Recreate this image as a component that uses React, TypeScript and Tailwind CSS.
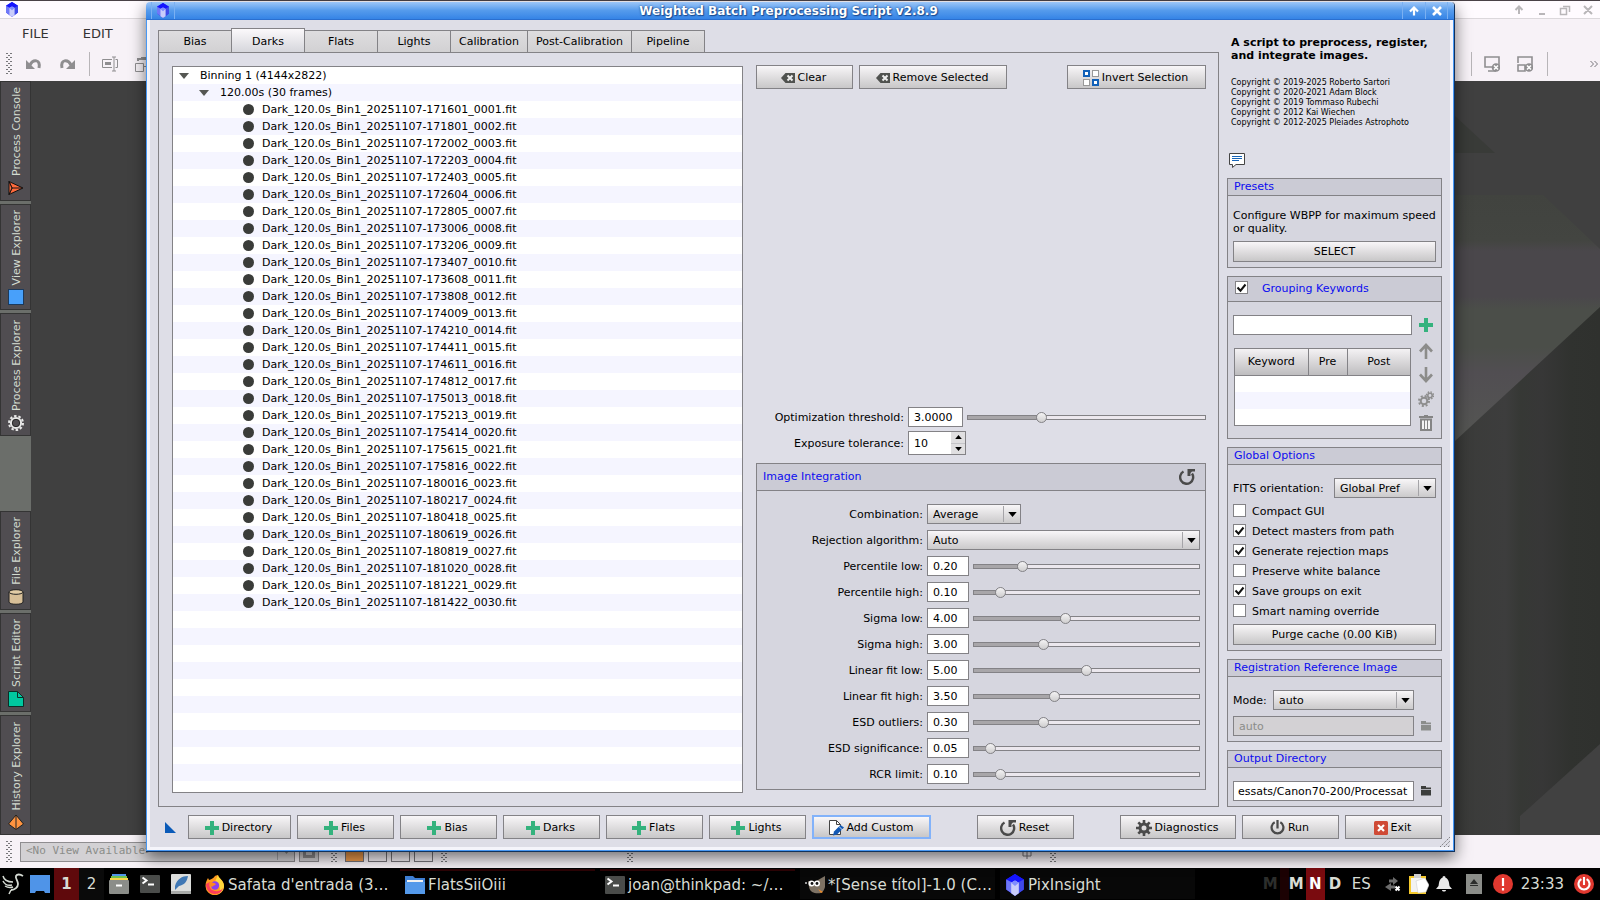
import type { ReactNode } from 'react'

const frames = [
  '171601', '171801', '172002', '172203', '172403', '172604', '172805', '173006', '173206', '173407',
  '173608', '173808', '174009', '174210', '174411', '174611', '174812', '175013', '175213', '175414',
  '175615', '175816', '180016', '180217', '180418', '180619', '180819', '181020', '181221', '181422',
]

const tabs = [
  { label: 'Bias', width: 'w-[74px]' },
  { label: 'Darks', width: 'w-[74px]' },
  { label: 'Flats', width: 'w-[74px]' },
  { label: 'Lights', width: 'w-[74px]' },
  { label: 'Calibration', width: 'w-[78px]' },
  { label: 'Post-Calibration', width: 'w-[105px]' },
  { label: 'Pipeline', width: 'w-[74px]' },
]

const sliders = [
  { label: 'Percentile low:', value: '0.20', pos: 20 },
  { label: 'Percentile high:', value: '0.10', pos: 10 },
  { label: 'Sigma low:', value: '4.00', pos: 40 },
  { label: 'Sigma high:', value: '3.00', pos: 30 },
  { label: 'Linear fit low:', value: '5.00', pos: 50 },
  { label: 'Linear fit high:', value: '3.50', pos: 35 },
  { label: 'ESD outliers:', value: '0.30', pos: 30 },
  { label: 'ESD significance:', value: '0.05', pos: 5 },
  { label: 'RCR limit:', value: '0.10', pos: 10 },
]

const options = [
  { label: 'Compact GUI', checked: false },
  { label: 'Detect masters from path', checked: true },
  { label: 'Generate rejection maps', checked: true },
  { label: 'Preserve white balance', checked: false },
  { label: 'Save groups on exit', checked: true },
  { label: 'Smart naming override', checked: false },
]

/* ---------- icons ---------- */

function Gem({ className }: { className: string }) {
  return (
    <svg className={className} viewBox="0 0 16 20" aria-hidden="true">
      <path d="M8 0 16 5v9l-8 6-8-6V5z" fill="#2a2af0" />
      <path d="M8 0 16 5 8 9.500 0 5z" fill="#1414ff" />
      <path d="M0 5 5 7.500V17.500L0 14z" fill="#6f78f8" />
      <path d="M16 5 11 7.500V17.500L16 14z" fill="#3f4be8" />
      <path d="M4.500 8 8 6l3.500 2v9.500L8 20l-3.500-2.500z" fill="#c9cdfb" />
      <path d="M4.500 8 8 6l3.500 2-3.500 3z" fill="#7f8cff" />
    </svg>
  )
}

function Plus() {
  return (
    <svg className="size-[14px]" viewBox="0 0 14 14" aria-hidden="true">
      <path d="M5 0h4v5h5v4H9v5H5V9H0V5h5z" fill="#34b27d" />
    </svg>
  )
}

function ClearIcon() {
  return (
    <svg className="h-[10px] w-[14px]" viewBox="0 0 14 10" aria-hidden="true">
      <path d="M4.500 0H14v10H4.500L0 5z" fill="#50524f" />
      <path d="M6.500 2.500l5 5M11.500 2.500l-5 5" stroke="#eee" strokeWidth="2" />
    </svg>
  )
}

function InvertIcon() {
  return (
    <svg className="size-4" viewBox="0 0 16 16" aria-hidden="true">
      <rect x="1" y="1" width="5" height="5" fill="#fff" stroke="#1160b8" strokeWidth="2" />
      <rect x="10" y="10" width="5" height="5" fill="#fff" stroke="#1160b8" strokeWidth="2" />
      <rect x="9.500" y="0.500" width="6" height="6" fill="#fff" stroke="#999" />
      <rect x="0.500" y="9.500" width="6" height="6" fill="#fff" stroke="#999" />
    </svg>
  )
}

function ResetIcon() {
  return (
    <svg className="size-4" viewBox="0 0 16 16" aria-hidden="true">
      <path d="M4.500 2.500A6.500 6.500 0 1 0 13 4.500" fill="none" stroke="#4a4a4a" strokeWidth="2.400" />
      <path d="M8.500 0H16v2.500h-3L11.500 4v3H8.500z" fill="#4a4a4a" />
    </svg>
  )
}

function Gear({ className, color }: { className: string; color: string }) {
  return (
    <svg className={className} viewBox="0 0 16 16" aria-hidden="true">
      <circle cx="8" cy="8" r="4" fill="none" stroke={color} strokeWidth="3" />
      <path
        d="M8 0v3M8 13v3M0 8h3M13 8h3M2.300 2.300l2.200 2.200M11.500 11.500l2.200 2.200M13.700 2.300l-2.200 2.200M4.500 11.500l-2.200 2.200"
        stroke={color}
        strokeWidth="2.600"
      />
    </svg>
  )
}

function RingGear() {
  return (
    <svg className="size-4" viewBox="0 0 16 16" fill="none" aria-hidden="true">
      <circle cx="8" cy="8" r="7" stroke="#e8e8e8" strokeWidth="2" strokeDasharray="2.500 1.898" />
      <circle cx="8" cy="8" r="5" stroke="#e8e8e8" strokeWidth="2.200" />
      <circle cx="8" cy="8" r="3.700" stroke="#1c1c1c" strokeWidth="0.800" />
    </svg>
  )
}

function Gears() {
  return (
    <svg className="size-4" viewBox="0 0 16 16" fill="none" stroke="#8e8e8e" aria-hidden="true">
      <circle cx="6" cy="10" r="3.300" strokeWidth="2" />
      <circle cx="6" cy="10" r="5" strokeWidth="2" strokeDasharray="2 1.930" />
      <circle cx="12" cy="4.500" r="2.200" strokeWidth="1.600" />
      <circle cx="12" cy="4.500" r="3.600" strokeWidth="1.400" strokeDasharray="1.500 1.330" />
    </svg>
  )
}

function ArrowIcon({ down }: { down?: boolean }) {
  return (
    <svg className={down ? 'size-4 rotate-180' : 'size-4'} viewBox="0 0 16 16" aria-hidden="true">
      <path d="M8 2v14M2 8.500 8 2l6 6.500" fill="none" stroke="#8c8c8a" strokeWidth="2.600" />
    </svg>
  )
}

function Trash() {
  return (
    <svg className="size-4" viewBox="0 0 16 16" aria-hidden="true">
      <path d="M6 0h4v1h5v2H1V1h5z" fill="#858585" />
      <path d="M3 4.500h10V15H3z" fill="#f4f4f4" stroke="#858585" strokeWidth="2" />
      <path d="M6.500 5v9M9.500 5v9" stroke="#858585" />
    </svg>
  )
}

function Folder({ color }: { color: string }) {
  return (
    <svg className="h-[10px] w-[10px]" viewBox="0 0 10 10" aria-hidden="true">
      <path d="M0 0h5v1.500h5V3H0zM0 3.800h10V9.500H0z" fill={color} />
    </svg>
  )
}

function Comment() {
  return (
    <svg className="size-4" viewBox="0 0 16 16" aria-hidden="true">
      <path d="M.5.5h15v11H7l-3.500 3v-3h-3z" fill="#fff" stroke="#444" />
      <path d="M3 3.500h10M3 5.500h10M3 7.500h7" stroke="#1764b8" />
    </svg>
  )
}

function CustomIcon() {
  return (
    <svg className="size-4" viewBox="0 0 16 16" aria-hidden="true">
      <path d="M1.500.5h7l4 4v10h-11z" fill="#fff" stroke="#444" />
      <path d="M8.500.5v4h4" fill="none" stroke="#444" />
      <path d="M5 15.500l1-4 6.500-6.500L16 7.500 9 14.500z" fill="#1258b4" />
      <path d="M11 6.500l3.500 3.500" stroke="#fff" strokeWidth="0.800" />
    </svg>
  )
}

function Power({ color, className }: { color: string; className: string }) {
  return (
    <svg className={className} viewBox="0 0 16 16" fill="none" stroke={color} strokeWidth="2.400" aria-hidden="true">
      <path d="M5 2.500A6.300 6.300 0 1 0 11 2.500M8 0v9" />
    </svg>
  )
}

function ExitIcon() {
  return (
    <svg className="size-[14px]" viewBox="0 0 14 14" aria-hidden="true">
      <rect width="14" height="14" rx="1.500" fill="#cf4a35" />
      <path d="M4 4l6 6M10 4l-6 6" stroke="#fff" strokeWidth="2.200" />
    </svg>
  )
}

function Triangle({ className }: { className: string }) {
  return (
    <svg className={className} viewBox="0 0 10 6" aria-hidden="true">
      <path d="M0 0h10L5 6z" fill="currentColor" />
    </svg>
  )
}

function Terminal() {
  return (
    <svg className="size-5" viewBox="0 0 20 20" aria-hidden="true">
      <rect y="1" width="20" height="18" rx="1" fill="#4a4c4a" />
      <path d="M2.500 3.500l4 3-4 3M8 10.500h6" fill="none" stroke="#fff" strokeWidth="2" />
    </svg>
  )
}

function Grip() {
  return (
    <svg className="h-[22px] w-[6px] shrink-0" viewBox="0 0 6 22" aria-hidden="true">
      <path d="M1 0v22M5 0v22" stroke="#77777a" strokeWidth="2" strokeDasharray="1 3" />
      <path d="M3 2v20" stroke="#77777a" strokeWidth="2" strokeDasharray="1 3" />
    </svg>
  )
}

/* ---------- controls ---------- */

function Btn({ icon, width, focused, tall = true, children }: {
  icon?: ReactNode
  width: string
  focused?: boolean
  tall?: boolean
  children: ReactNode
}) {
  return (
    <button
      type="button"
      className={`flex shrink-0 items-center justify-center gap-[3px] bg-linear-to-b from-[#f8f6f8] to-[#c8c7c8] whitespace-nowrap ${width} ${
        tall ? 'h-6 pt-px pr-0.5' : 'h-[21px]'
      } ${focused ? 'border-2 border-[#82b2fa]' : 'border border-[#838286]'}`}
    >
      {icon}
      {children}
    </button>
  )
}

function Select({ id, value, width }: { id: string; value: string; width: string }) {
  return (
    <div className={`relative ${width}`}>
      <select
        id={id}
        className="block h-5 w-full appearance-none border border-[#838286] bg-linear-to-b from-[#f8f6f8] to-[#cbcacb] px-[5px] pt-px leading-[17px]"
      >
        <option>{value}</option>
      </select>
      <span className="pointer-events-none absolute top-0.5 right-0 flex h-4 w-[18px] items-center justify-center border-l border-[#a5a4a8] pr-px text-black">
        <Triangle className="h-[5px] w-[9px]" />
      </span>
    </div>
  )
}

function Slider({ label, pos }: { label: string; pos: number }) {
  return (
    <input
      type="range"
      aria-label={label}
      defaultValue={pos}
      className="h-[5px] min-w-0 flex-1 appearance-none border border-[#838286] [&::-webkit-slider-thumb]:size-[11px] [&::-webkit-slider-thumb]:appearance-none [&::-webkit-slider-thumb]:rounded-full [&::-webkit-slider-thumb]:border [&::-webkit-slider-thumb]:border-[#838286] [&::-webkit-slider-thumb]:bg-linear-to-b [&::-webkit-slider-thumb]:from-[#f4f3f4] [&::-webkit-slider-thumb]:to-[#cfcecf]"
      style={{ background: `linear-gradient(to right, #a8a6a9 ${pos}%, #ece8ee ${pos}%)` }}
    />
  )
}

function Check({ id, checked }: { id: string; checked: boolean }) {
  return (
    <span className="relative block size-[13px] shrink-0">
      <input
        id={id}
        type="checkbox"
        defaultChecked={checked}
        className="peer block size-[13px] appearance-none border border-[#838286] bg-white"
      />
      <svg className="pointer-events-none absolute inset-0 hidden size-[13px] peer-checked:block" viewBox="0 0 13 13">
        <path d="M2.500 6.500l3 3.200L10.500 3.500" fill="none" stroke="#111" strokeWidth="2" />
      </svg>
    </span>
  )
}

function Group({ title, children }: { title: string; children: ReactNode }) {
  return (
    <section className="border border-[#838286] bg-[#d6d6df]">
      <h2 className="h-[17px] border-b border-[#838286] bg-[#cbcbd5] pl-1.5 leading-[15px] text-[#0c0cf0]">{title}</h2>
      <div className="px-[5px] pt-[13px] pb-[5px]">{children}</div>
    </section>
  )
}

/* ---------- dialog ---------- */

function FrameTree() {
  return (
    <ul className="mt-[13px] mb-[13px] min-w-0 flex-1 overflow-hidden border border-[#838286] bg-[repeating-linear-gradient(#fff_0_17px,#f5f5ff_17px_34px)] leading-[17px]">
      <li className="flex h-[17px] items-center gap-[11px] pl-1.5">
        <Triangle className="h-[6px] w-[10px] text-[#555753]" />
        Binning 1 (4144x2822)
      </li>
      <li className="flex h-[17px] items-center gap-[11px] pl-[26px]">
        <Triangle className="h-[6px] w-[10px] text-[#555753]" />
        120.00s (30 frames)
      </li>
      {frames.map((time, i) => (
        <li key={time} className="flex h-[17px] items-center gap-2 pl-[70px]">
          <span className="size-[11px] rounded-full bg-[#3a3c39]" />
          {`Dark_120.0s_Bin1_20251107-${time}_${String(i + 1).padStart(4, '0')}.fit`}
        </li>
      ))}
    </ul>
  )
}

function DarksSettings() {
  return (
    <div className="flex w-[450px] shrink-0 flex-col pt-3 pb-4">
      <div className="flex gap-1.5">
        <Btn width="w-[97px]" icon={<ClearIcon />}>Clear</Btn>
        <Btn width="w-[148px]" icon={<ClearIcon />}>Remove Selected</Btn>
        <div className="flex-1" />
        <Btn width="w-[139px]" icon={<InvertIcon />}>Invert Selection</Btn>
      </div>
      <div className="flex-1" />
      <div className="flex h-5 items-center gap-1">
        <label htmlFor="opt-threshold" className="w-[148px] pt-px text-right">Optimization threshold:</label>
        <input id="opt-threshold" defaultValue="3.0000" className="h-5 w-[55px] border border-[#838286] bg-white px-[5px] pt-px" />
        <Slider label="Optimization threshold" pos={30} />
      </div>
      <div className="mt-1 mb-2 flex h-6 items-center gap-1">
        <label htmlFor="exp-tolerance" className="w-[148px] pt-px text-right">Exposure tolerance:</label>
        <div className="flex h-6 w-[58px] border border-[#838286] bg-white">
          <input id="exp-tolerance" defaultValue="10" className="min-w-0 flex-1 px-[5px] pt-px" />
          <div className="flex w-[14px] flex-col bg-[#e0dfe1]">
            <button type="button" aria-label="Increase" className="flex flex-1 items-center justify-center border-b border-[#c4c4c8]">
              <Triangle className="h-1 w-[7px] rotate-180" />
            </button>
            <button type="button" aria-label="Decrease" className="flex flex-1 items-center justify-center">
              <Triangle className="h-1 w-[7px]" />
            </button>
          </div>
        </div>
      </div>
      <section className="border border-[#838286] bg-[#d6d6df]">
        <div className="flex h-[27px] items-center justify-between border-b border-[#838286] bg-[#cbcbd5] pr-[10px] pb-px pl-1.5">
          <h2 className="text-[#0c0cf0]">Image Integration</h2>
          <button type="button" aria-label="Reset image integration">
            <ResetIcon />
          </button>
        </div>
        <div className="flex flex-col gap-1.5 px-[5px] pt-[13px] pb-[5px]">
          <div className="flex items-center gap-1">
            <label htmlFor="combination" className="w-[161px] pt-px text-right">Combination:</label>
            <Select id="combination" value="Average" width="w-[94px]" />
          </div>
          <div className="flex items-center gap-1">
            <label htmlFor="rejection" className="w-[161px] pt-px text-right">Rejection algorithm:</label>
            <Select id="rejection" value="Auto" width="flex-1" />
          </div>
          {sliders.map(({ label, value, pos }) => (
            <div key={label} className="flex h-5 items-center gap-1">
              <label htmlFor={label} className="w-[161px] pt-px text-right">{label}</label>
              <input id={label} defaultValue={value} className="h-5 w-[42px] border border-[#838286] bg-white px-[5px] pt-px" />
              <Slider label={label} pos={pos} />
            </div>
          ))}
        </div>
      </section>
    </div>
  )
}

function SidePanel() {
  return (
    <aside className="flex w-[215px] shrink-0 flex-col gap-2">
      <div className="flex-1 pt-4">
        <p className="pl-1 font-bold">
          A script to preprocess, register,
          <br />
          and integrate images.
        </p>
        <div className="mt-4 pl-1 text-[8px] leading-[10px] whitespace-nowrap">
          <p>Copyright © 2019-2025 Roberto Sartori</p>
          <p>Copyright © 2020-2021 Adam Block</p>
          <p>Copyright © 2019 Tommaso Rubechi</p>
          <p>Copyright © 2012 Kai Wiechen</p>
          <p>Copyright © 2012-2025 Pleiades Astrophoto</p>
        </div>
        <button type="button" aria-label="Show messages" className="mt-[25px] ml-0.5 block">
          <Comment />
        </button>
      </div>

      <Group title="Presets">
        <p className="mb-1.5">
          Configure WBPP for maximum speed
          <br />
          or quality.
        </p>
        <Btn width="w-full" tall={false}>SELECT</Btn>
      </Group>

      <section className="border border-[#838286] bg-[#d6d6df]">
        <div className="flex h-[25px] items-start gap-[14px] border-b border-[#838286] bg-[#cbcbd5] pt-1 pl-[7px]">
          <Check id="grouping" checked />
          <label htmlFor="grouping" className="pt-px text-[#0c0cf0]">Grouping Keywords</label>
        </div>
        <div className="flex gap-1 px-[5px] pt-[13px] pb-[3px]">
          <div className="min-w-0 flex-1">
            <input aria-label="Keyword" className="block h-5 w-full border border-[#838286] bg-white px-1" />
            <div className="mx-px mt-[13px] h-[78px] border border-[#838286] bg-white">
              <table className="w-full table-fixed border-collapse">
                <thead>
                  <tr className="h-[26px] bg-linear-to-b from-[#f4f2f4] to-[#bebdbf]">
                    <th className="w-[73px] border-r border-b border-[#838286] p-0 font-normal">Keyword</th>
                    <th className="w-[39px] border-r border-b border-[#838286] p-0 font-normal">Pre</th>
                    <th className="border-b border-[#838286] p-0 font-normal">Post</th>
                  </tr>
                </thead>
                <tbody>
                  <tr className="h-[17px]"><td colSpan={3} /></tr>
                  <tr className="h-[17px] bg-[#f5f5ff]"><td colSpan={3} /></tr>
                </tbody>
              </table>
            </div>
          </div>
          <div className="flex w-5 flex-col items-center">
            <button type="button" aria-label="Add keyword" className="mb-1 grid h-5 place-items-center"><Plus /></button>
            <button type="button" aria-label="Move up" className="grid h-6 place-items-center"><ArrowIcon /></button>
            <button type="button" aria-label="Move down" className="grid h-6 place-items-center"><ArrowIcon down /></button>
            <button type="button" aria-label="Keyword settings" className="grid h-6 place-items-center"><Gears /></button>
            <button type="button" aria-label="Delete keyword" className="grid h-6 place-items-center"><Trash /></button>
          </div>
        </div>
      </section>

      <Group title="Global Options">
        <div className="mb-[3px] flex items-center justify-between">
          <label htmlFor="fits" className="pt-px">FITS orientation:</label>
          <Select id="fits" value="Global Pref" width="w-[102px]" />
        </div>
        {options.map(({ label, checked }) => (
          <div key={label} className="flex h-5 gap-1.5 pt-[3px]">
            <Check id={label} checked={checked} />
            <label htmlFor={label} className="pt-px">{label}</label>
          </div>
        ))}
        <div className="mt-[3px]">
          <Btn width="w-full" tall={false}>Purge cache (0.00 KiB)</Btn>
        </div>
      </Group>

      <Group title="Registration Reference Image">
        <div className="mb-1.5 flex items-center pr-[22px]">
          <label htmlFor="mode" className="w-10 pt-px">Mode:</label>
          <Select id="mode" value="auto" width="flex-1" />
        </div>
        <div className="flex items-center gap-0.5">
          <input
            aria-label="Reference image"
            disabled
            defaultValue="auto"
            className="h-5 min-w-0 flex-1 border border-[#838286] bg-[#d3d1d4] px-[5px] pt-px text-[#8b8d89]"
          />
          <button type="button" disabled aria-label="Browse reference image" className="grid w-5 place-items-center">
            <Folder color="#8b8d8b" />
          </button>
        </div>
      </Group>

      <Group title="Output Directory">
        <div className="flex items-center gap-0.5">
          <input
            aria-label="Output directory"
            defaultValue="essats/Canon70-200/Processat"
            className="h-5 min-w-0 flex-1 border border-[#838286] bg-white px-1 pt-px"
          />
          <button type="button" aria-label="Browse output directory" className="grid w-5 place-items-center">
            <Folder color="#3c3e3c" />
          </button>
        </div>
      </Group>
    </aside>
  )
}

function Dialog() {
  return (
    <div
      role="dialog"
      aria-label="Weighted Batch Preprocessing Script"
      className="absolute top-0.5 right-[145px] bottom-12 left-[146px] flex flex-col rounded-t-sm border-r border-b border-[#10315c] text-[11px] leading-[13px] text-black shadow-[0_6px_16px_rgba(0,0,0,0.55)]"
    >
      <header className="flex h-[18px] shrink-0 items-center rounded-t-sm border-b border-[#2a6fd0] bg-linear-to-b from-[#9cc6f8] via-[#559bec] to-[#3584e6]">
        <div className="ml-[5px] flex h-full w-6 items-center justify-center border-x border-[#7ab0f2]">
          <Gem className="h-[15px] w-3" />
        </div>
        <h1 className="flex-1 text-center text-[12px] leading-[20px] font-bold text-white [text-shadow:0_0_2px_#123f80,1px_1px_1px_#1d4f96]">
          Weighted Batch Preprocessing Script v2.8.9
        </h1>
        <button type="button" aria-label="Shade" className="grid h-full w-[23px] place-items-center border-l border-[#7ab0f2]">
          <svg className="size-[10px]" viewBox="0 0 10 10">
            <path d="M5 9.500V2M1 5.500 5 1.500l4 4" fill="none" stroke="#fff" strokeWidth="2.200" />
          </svg>
        </button>
        <button type="button" aria-label="Close" className="mr-1.5 grid h-full w-[23px] place-items-center border-x border-[#7ab0f2]">
          <svg className="size-[10px]" viewBox="0 0 10 10">
            <path d="M1 1l8 8M9 1l-8 8" stroke="#fff" strokeWidth="2.600" />
          </svg>
        </button>
      </header>

      <div className="flex min-h-0 flex-1 flex-col border-x border-b border-[#4898f4] bg-[#f5f5fb] px-[3px] pb-[3px]">
        <div className="relative flex min-h-0 flex-1 flex-col gap-2 bg-[#dedee7] px-2 pb-2">
          <div className="flex min-h-0 flex-1 gap-2">
            <div className="flex min-w-0 flex-1 flex-col pt-2">
              <div role="tablist" className="flex h-6 shrink-0 items-end">
                {tabs.map(({ label, width }, i) => (
                  <button
                    key={label}
                    type="button"
                    role="tab"
                    aria-selected={i === 1}
                    className={`${width} -mr-px border border-b-0 border-[#838286] ${
                      i === 1
                        ? 'z-10 h-6 bg-linear-to-b from-[#fbf9fb] to-[#d6d6dc] pt-0.5'
                        : 'h-[22px] bg-linear-to-b from-[#dedddf] to-[#d2d1d3]'
                    }`}
                  >
                    {label}
                  </button>
                ))}
              </div>
              <div className="flex min-h-0 flex-1 gap-[13px] border border-[#838286] pr-3 pl-[13px]">
                <FrameTree />
                <DarksSettings />
              </div>
            </div>
            <SidePanel />
          </div>

          <footer className="flex items-center gap-1.5 pl-[7px]">
            <svg className="mr-1.5 size-[11px]" viewBox="0 0 11 11" aria-hidden="true">
              <path d="M0 0v11h11z" fill="#0a5ab8" />
            </svg>
            <Btn width="w-[103px]" icon={<Plus />}>Directory</Btn>
            <Btn width="w-[97px]" icon={<Plus />}>Files</Btn>
            <Btn width="w-[97px]" icon={<Plus />}>Bias</Btn>
            <Btn width="w-[97px]" icon={<Plus />}>Darks</Btn>
            <Btn width="w-[97px]" icon={<Plus />}>Flats</Btn>
            <Btn width="w-[97px]" icon={<Plus />}>Lights</Btn>
            <Btn width="w-[119px]" focused icon={<CustomIcon />}>Add Custom</Btn>
            <div className="flex flex-1 justify-center">
              <Btn width="w-[97px]" icon={<ResetIcon />}>Reset</Btn>
            </div>
            <Btn width="w-[116px]" icon={<Gear className="size-4" color="#4a4a4a" />}>Diagnostics</Btn>
            <Btn width="w-[97px]" icon={<Power className="size-[15px]" color="#4a4a4a" />}>Run</Btn>
            <Btn width="w-[97px]" icon={<ExitIcon />}>Exit</Btn>
          </footer>
          <svg className="absolute right-0 bottom-0 size-[10px]" viewBox="0 0 10 10" stroke="#77777a" strokeDasharray="1.500 1" aria-hidden="true">
            <path d="M0 10 10 0M4 10l6-6M8 10l2-2" />
          </svg>
        </div>
      </div>
    </div>
  )
}

/* ---------- application behind the dialog ---------- */

function DockTab({ label, height, icon }: { label: string; height: string; icon: ReactNode }) {
  return (
    <button
      type="button"
      className={`flex w-[31px] shrink-0 flex-col items-center justify-end gap-1 border border-[#343434] bg-[#504d51] pb-1 ${height}`}
    >
      <span className="ml-0.5 rotate-180 leading-[14px] whitespace-nowrap [writing-mode:vertical-rl]">{label}</span>
      {icon}
    </button>
  )
}

function Dock() {
  return (
    <nav className="flex w-[31px] shrink-0 flex-col gap-[3px] bg-[#6b6e6a] text-[11px] text-[#d3dbd0]">
      <DockTab
        label="Process Console"
        height="h-[120px]"
        icon={
          <svg className="size-4" viewBox="0 0 16 16">
            <path d="M1 1.500 15 8 1 14.500 4 8z" fill="#ff6a3c" stroke="#111" />
            <path d="M1 1.500 4 8l-3 6.500z" fill="#ff6a3c" stroke="#111" />
            <path d="M4 8h10" stroke="#111" />
          </svg>
        }
      />
      <DockTab
        label="View Explorer"
        height="h-[106px]"
        icon={
          <svg className="size-4" viewBox="0 0 16 16">
            <rect x=".5" y=".5" width="15" height="15" fill="#48a0fa" stroke="#1c3a5c" />
          </svg>
        }
      />
      <DockTab label="Process Explorer" height="h-[123px]" icon={<RingGear />} />
      <div className="flex-1" />
      <DockTab
        label="File Explorer"
        height="h-[99px]"
        icon={
          <svg className="size-4" viewBox="0 0 16 16">
            <path d="M1 3v10c0 3 14 3 14 0V3" fill="#d8bf98" stroke="#222" />
            <ellipse cx="8" cy="3" rx="7" ry="2.300" fill="#e2cca6" stroke="#222" />
          </svg>
        }
      />
      <DockTab
        label="Script Editor"
        height="h-[99px]"
        icon={
          <svg className="size-4" viewBox="0 0 16 16">
            <path d="M.5.500h9l6 6v9H.5z" fill="#00c8a0" stroke="#0b2f28" />
            <path d="M9.500.5v6h6" fill="none" stroke="#0b2f28" />
          </svg>
        }
      />
      <DockTab
        label="History Explorer"
        height="h-[120px]"
        icon={
          <svg className="size-4" viewBox="0 0 16 16">
            <path d="M8 1 15.500 10 8 15.500.5 10z" fill="#ff9440" stroke="#222" />
            <path d="M8 1v14" stroke="#222" />
          </svg>
        }
      />
    </nav>
  )
}

function Wallpaper() {
  return (
    <svg className="absolute top-0 right-0 h-full w-[145px]" viewBox="0 0 145 754" preserveAspectRatio="none" aria-hidden="true">
      <defs>
        <linearGradient id="lit" x1="0" y1="0" x2="0" y2="1">
          <stop offset="0" stopColor="#41433f" />
          <stop offset="0.180" stopColor="#434541" />
          <stop offset="0.220" stopColor="#4a474b" />
          <stop offset="0.400" stopColor="#4a474b" />
          <stop offset="0.450" stopColor="#4b4e49" />
          <stop offset="0.600" stopColor="#4b4e49" />
          <stop offset="0.700" stopColor="#514e52" />
          <stop offset="1" stopColor="#555753" />
        </linearGradient>
        <linearGradient id="folds" x1="0" y1="0" x2="1" y2="0">
          <stop offset="0" stopColor="#3a3b39" />
          <stop offset="0.350" stopColor="#3d3d3d" />
          <stop offset="0.450" stopColor="#363835" />
          <stop offset="0.600" stopColor="#373737" />
          <stop offset="0.800" stopColor="#30322f" />
          <stop offset="1" stopColor="#2f312e" />
        </linearGradient>
      </defs>
      <rect width="145" height="754" fill="#404040" />
      <path d="M0 35 40 72H0z" fill="#393b38" />
      <path d="M0 114h88l57 54v200H0z" fill="url(#lit)" />
      <path d="M0 360 145 226v528H0z" fill="url(#folds)" />
      <path d="M65 754v-19l80-72v91z" fill="#414141" />
    </svg>
  )
}

function MainWindow() {
  return (
    <div className="flex min-h-0 flex-1 flex-col border-t border-[#4a4248] bg-[#f7f2f7] text-[13px] text-[#333]">
      <div className="flex h-[18px] shrink-0 items-center justify-between border-b border-[#dcd8dc] bg-[#fffbff] pr-[7px] pl-1.5 text-[#b9b6b9]">
        <Gem className="h-[15px] w-3" />
        <svg className="h-3 w-20" viewBox="0 0 80 12" fill="none" stroke="currentColor" strokeWidth="2" aria-hidden="true">
          <path d="M6 10V3M2.500 6 6 2.500 9.500 6M26 10h6M71 2l8 8M79 2l-8 8" />
          <path d="M47.500 4.500h6v6h-6zM50 2.500h6.500V8" strokeWidth="1.500" />
        </svg>
      </div>
      <div className="flex h-[30px] shrink-0 items-center gap-[34px] pl-[22px]">
        <button type="button">FILE</button>
        <button type="button">EDIT</button>
      </div>
      <div className="flex h-8 shrink-0 items-center pr-0.5 pb-0.5 pl-1.5">
        <Grip />
        <svg className="ml-3.5 h-4 w-4" viewBox="0 0 16 16" fill="none" stroke="#8f8e90" strokeWidth="3" aria-hidden="true">
          <path d="M4 9C7 3 15 3 13 12" />
          <path d="M0 4v9h9z" fill="#8f8e90" stroke="none" />
        </svg>
        <svg className="ml-[17px] h-4 w-4" viewBox="0 0 16 16" fill="none" stroke="#8f8e90" strokeWidth="3" aria-hidden="true">
          <path d="M12 9C9 3 1 3 3 12" />
          <path d="M16 4v9H7z" fill="#8f8e90" stroke="none" />
        </svg>
        <span className="ml-[14px] h-6 w-px bg-[#b8b5b8]" />
        <svg className="ml-3 h-4 w-4" viewBox="0 0 16 16" fill="none" stroke="#8f8e90" aria-hidden="true">
          <path d="M10 3.500H.5v8H10M13.500 3.500h2v8h-2M10 1h4M10 15h4M12 1v14" />
          <path d="M3 7.500h6" strokeWidth="3" />
        </svg>
        <svg className="ml-[17px] h-4 w-4" viewBox="0 0 16 16" fill="none" stroke="#8f8e90" aria-hidden="true">
          <path d="M.5 7.500h8v8h-8zM6 1.500h9v9H9" />
          <path d="M3 5V3h10" strokeWidth="2" />
        </svg>
        <div className="flex-1" />
        <span className="h-6 w-px bg-[#b8b5b8]" />
        <svg className="ml-3 h-4 w-4" viewBox="0 0 16 16" fill="none" stroke="#8f8e90" strokeWidth="1.600" aria-hidden="true">
          <path d="M1 1h14v10H1zM4 15h8" />
          <circle cx="12" cy="11.500" r="3.500" fill="#8f8e90" />
          <path d="M10 9.500l4 4M14 9.500l-4 4" stroke="#fff" />
        </svg>
        <svg className="ml-[17px] h-4 w-4" viewBox="0 0 16 16" fill="none" stroke="#8f8e90" strokeWidth="1.600" aria-hidden="true">
          <path d="M1 7V1h14v10M1 9h7v6H1z" />
          <circle cx="12" cy="11.500" r="3.500" fill="#8f8e90" />
          <path d="M10 9.500l4 4M14 9.500l-4 4" stroke="#fff" />
        </svg>
        <span className="ml-3.5 h-6 w-px bg-[#b8b5b8]" />
        <svg className="ml-[42px] h-2 w-2" viewBox="0 0 8 8" fill="none" stroke="#77757a" aria-hidden="true">
          <path d="M.5 1l3 3-3 3M4.500 1l3 3-3 3" />
        </svg>
      </div>

      <div className="relative flex min-h-0 flex-1 bg-[#404040]">
        <Dock />
        <Wallpaper />
      </div>

      <div className="flex h-[33px] shrink-0 items-center pl-1.5">
        <Grip />
        <div className="relative ml-2 w-[275px]">
          <select
            disabled
            aria-label="View"
            className="block h-5 w-full appearance-none border border-[#8f8d90] bg-[#d3d1d4] px-[5px] font-['DejaVu_Sans_Mono',monospace] text-[11px] text-[#8b8d89] opacity-100"
          >
            <option>&lt;No View Available&gt;</option>
          </select>
          <span className="absolute top-0.5 right-0 flex h-4 w-[18px] items-center justify-center border-l border-[#a5a4a8] text-[#8b8d89]">
            <Triangle className="h-[5px] w-[9px]" />
          </span>
        </div>
        <button type="button" aria-label="View mode" className="mr-3 ml-1 grid h-5 w-5 place-items-center border border-[#8f8d90] bg-[#d3d1d4]">
          <span className="size-3 border-[3px] border-[#8f8e90]" />
        </button>
        <Grip />
        <div className="mr-2 ml-2 flex gap-1">
          <span className="h-5 w-[19px] border border-[#77757a] bg-[#f09c4c]" />
          <span className="h-5 w-[19px] border border-[#77757a]" />
          <span className="h-5 w-[19px] border border-[#77757a]" />
          <span className="h-5 w-[19px] border border-[#77757a]" />
        </div>
        <Grip />
        <span className="w-[180px]" />
        <Grip />
        <svg className="ml-[386px] size-4" viewBox="0 0 16 16" fill="none" stroke="#77757a" aria-hidden="true">
          <path d="M8 0v15M4 4v8h8V4" />
        </svg>
        <span className="w-[15px]" />
        <Grip />
      </div>
    </div>
  )
}

/* ---------- taskbar ---------- */

function Task({ icon, stripe, active, children }: { icon: ReactNode; stripe?: boolean; active?: boolean; children: ReactNode }) {
  return (
    <button
      type="button"
      className={`flex h-[30px] w-[195px] shrink-0 items-center gap-[3px] border-t-2 pl-[5px] whitespace-nowrap ${
        stripe ? 'border-[#2c0305]' : 'border-transparent'
      } ${active ? 'bg-[#080808]' : 'bg-black'}`}
    >
      {icon}
      {children}
    </button>
  )
}

function Taskbar() {
  return (
    <footer className="flex h-8 shrink-0 items-center bg-black text-[15px] text-[#d8dcd4]">
      <button type="button" aria-label="Menu" className="ml-0.5">
        <svg className="size-[22px]" viewBox="0 0 22 22" fill="none" stroke="#d5dad3" aria-hidden="true">
          <path d="M21 3c-3-2-6-2-7 0s2 5 2 8-3 6-7 6" strokeWidth="1.800" />
          <path d="M1 3c1 4 5 6 10 6M1 8c2 4 5 5 9 4M3 13c3 2 5 2 8 1M9 17l-2 4" strokeWidth="1.500" />
        </svg>
      </button>
      <button type="button" aria-label="Show desktop" className="ml-1.5">
        <svg className="size-5" viewBox="0 0 20 20">
          <path d="M0 1h20v18h-5l-1-2H6l-1 2H0z" fill="#4f94e8" />
        </svg>
      </button>
      <button type="button" className="ml-1 h-8 w-[25px] bg-[#5f090c] font-bold">1</button>
      <button type="button" className="h-8 w-[25px] bg-[#0a0a0a]">2</button>
      <button type="button" aria-label="Files" className="ml-[5px]">
        <svg className="size-5" viewBox="0 0 20 20">
          <path d="M3 0h14v2H3z" fill="#4f94e8" />
          <path d="M2 2h16v2H2z" fill="#6fc04c" />
          <path d="M1 4h18v3H1z" fill="#f6d34a" />
          <rect y="6" width="20" height="14" rx="1" fill="#8b8d89" />
          <path d="M7 11.500h6" stroke="#fff" strokeWidth="2" />
        </svg>
      </button>
      <button type="button" aria-label="Terminal" className="ml-[11px]"><Terminal /></button>
      <button type="button" aria-label="Text editor" className="mr-[9px] ml-[11px]">
        <svg className="size-5" viewBox="0 0 20 20">
          <rect width="20" height="20" rx="1" fill="#dcdedc" />
          <path d="M0 17h20v3H0z" fill="#a8aaa8" />
          <path d="M4 12C6 5 11 2 17 2c-1 6-4 9-9 10l-4 4z" fill="#3f78b4" />
        </svg>
      </button>

      <div className="flex gap-[5px]">
        <Task
          icon={
            <svg className="size-5" viewBox="0 0 20 20">
              <path d="M10 1c0 0 2-1 3-1 0 3 6 5 6 11a9 9 0 0 1-18.500 0C.5 7 2 5 3 3l1 2c2-1 4-1 6-4z" fill="#ff9a1f" />
              <path d="M13 0c0 3 6 5 6 11 0 4-3 7-6 8 4-5 1-10-3-12 1-3 2-5 3-7z" fill="#ffd83c" />
              <path d="M1 9c0 6 4 10 9 10s7-3 8-6c-3 4-9 4-12 1C4 12 4 9 5 7z" fill="#ff3d5a" />
              <circle cx="10" cy="10.500" r="4.200" fill="#8a3ff0" />
              <path d="M5 7c2 0 4 1 6 2-1 2-3 1-4 3-2-1-3-3-2-5z" fill="#ff8a1f" />
            </svg>
          }
        >
          Safata d'entrada (3…
        </Task>
        <Task
          stripe
          icon={
            <svg className="size-5" viewBox="0 0 20 20">
              <path d="M0 1h8l2 2h10v16H0z" fill="#3f7fd4" />
              <path d="M0 7h20v12H0z" fill="#5499ea" />
              <path d="M2 5h16v2H2z" fill="#f0f0f0" />
            </svg>
          }
        >
          FlatsSiiOiii
        </Task>
        <Task stripe icon={<Terminal />}>joan@thinkpad: ~/…</Task>
        <Task
          active
          icon={
            <svg className="size-5" viewBox="0 0 20 20">
              <path d="M3 6c4 2 8 1 10-1l7-4c1 6 1 14-4 17-5 1-11 0-12-6z" fill="#7d7264" />
              <circle cx="6.500" cy="8.500" r="3" fill="#fff" />
              <circle cx="12" cy="8.500" r="3" fill="#fff" />
              <circle cx="7" cy="8.500" r="1.400" fill="#111" />
              <circle cx="12" cy="8.500" r="1.400" fill="#111" />
              <circle cx="1" cy="8" r="1" fill="#ccc" />
              <path d="M13 14l5 3-2 1z" fill="#f08a24" />
            </svg>
          }
        >
          *[Sense títol]-1.0 (C…
        </Task>
        <Task active icon={<Gem className="h-[22px] w-5" />}>PixInsight</Task>
      </div>

      <div className="flex-1" />
      <div className="flex h-8 items-center">
        <span className="w-[17px] font-bold text-[#2c2e2c]">M</span>
        <span className="h-8 w-[9px] bg-[#1c0203]" />
        <span className="w-[17px] font-bold">M</span>
        <span className="h-8 w-[19px] bg-[#7a0b0f] text-center leading-8 font-bold text-white">N</span>
        <span className="w-[27px] pl-1 font-bold">D</span>
        <span className="w-[33px]">ES</span>
        <svg className="size-4" viewBox="0 0 16 16" aria-hidden="true">
          <path d="M8 1l5 4-5 4V6.500H4v-3h4zM6 7v2.500h4v3H6V15l-6-4z" fill="#6b6b6b" />
          <path d="M10.500 10.500l4 4M14.500 10.500l-4 4" stroke="#fff" strokeWidth="2" />
        </svg>
        <svg className="ml-2 size-5" viewBox="0 0 20 20" aria-hidden="true">
          <path d="M0 2h17v18H0z" fill="#f4c92c" />
          <path d="M2 4h13v14H2z" fill="#f2f2f2" />
          <path d="M5 0h7v4H5z" fill="#cfcfcf" />
          <path d="M7 7l9-3 4 7-3 7-8 1z" fill="#fff" stroke="#c8c8c8" strokeWidth="0.500" />
        </svg>
        <svg className="ml-[7px] size-4" viewBox="0 0 16 16" aria-hidden="true">
          <path d="M8 0c1 0 1.500.8 1.500 1.700C13 3 13 7 13.500 10L16 13H0l2.500-3C3 7 3 3 6.500 1.700 6.500.8 7 0 8 0zM6 14h4c0 2-4 2-4 0z" fill="#e8e8e8" />
        </svg>
        <svg className="ml-3.5 h-5 w-4" viewBox="0 0 16 20" aria-hidden="true">
          <rect width="16" height="20" fill="#8b8d89" />
          <path d="M8 5l4 5H4zM4 11h8v1H4z" fill="#2c2e2c" />
        </svg>
        <svg className="ml-[11px] size-5" viewBox="0 0 20 20" aria-hidden="true">
          <circle cx="10" cy="10" r="10" fill="#e0382f" />
          <path d="M10 4v8M10 14v2.500" stroke="#fff" strokeWidth="2.200" />
        </svg>
        <time className="ml-2">23:33</time>
        <button type="button" aria-label="Leave" className="mr-1.5 ml-2.5 grid size-5 place-items-center rounded-full bg-[#e0382f]">
          <Power className="size-3.5" color="#fff" />
        </button>
      </div>
    </footer>
  )
}

export default function App() {
  return (
    <div className="relative flex h-screen min-h-[640px] flex-col overflow-hidden bg-black font-['DejaVu_Sans',sans-serif]">
      <MainWindow />
      <Taskbar />
      <Dialog />
    </div>
  )
}
